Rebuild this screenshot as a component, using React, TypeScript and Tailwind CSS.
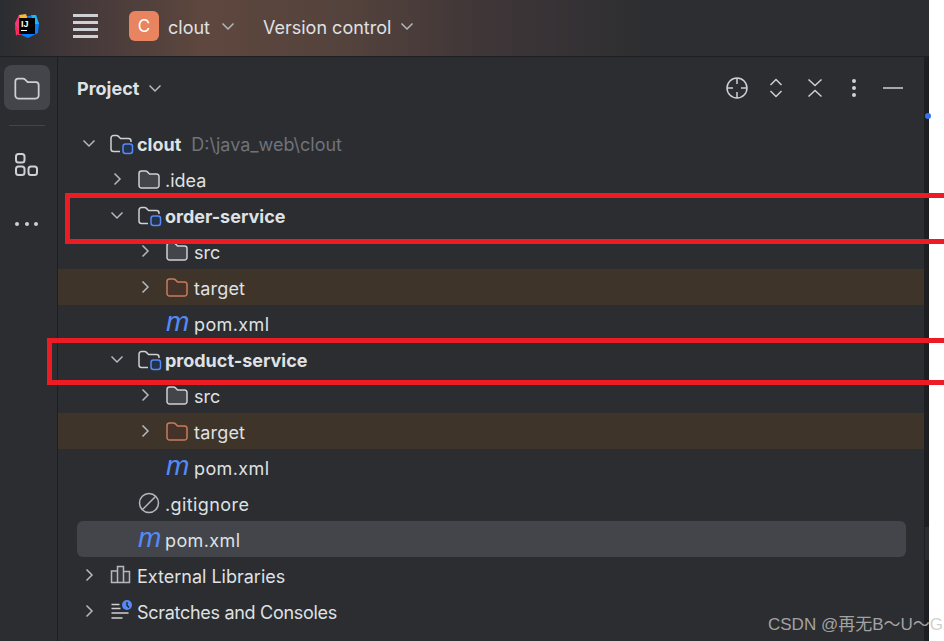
import type { ReactNode } from "react"

const Chevron = ({ dir, className = "text-[#b4b8bf]" }: { dir: "down" | "right"; className?: string }) => (
  <svg width="14" height="14" viewBox="0 0 14 14" fill="none" stroke="currentColor" strokeWidth="1.5" className={className}>
    {dir === "down" ? <path d="M1.5 4.5 7 10l5.5-5.5" /> : <path d="M4.5 1.5 10 7l-5.5 5.5" />}
  </svg>
)

const Folder = ({ color = "#ced0d6", fill = "#43454a" }: { color?: string; fill?: string }) => (
  <svg width="24" height="24" viewBox="0 0 24 24" fill={fill} stroke={color} strokeWidth="1.5">
    <path d="M2 6.500A2.500 2.500 0 0 1 4.500 4h4.200c.6 0 1.100.2 1.500.6L12.600 7h7a2.500 2.500 0 0 1 2.400 2.500v9a2.500 2.500 0 0 1-2.500 2.500h-15A2.500 2.500 0 0 1 2 18.500z" />
  </svg>
)

const ModuleFolder = () => (
  <svg width="26" height="24" viewBox="0 0 26 24" fill="none">
    <path d="M11 20.500H4.500A2.500 2.500 0 0 1 2 18V7A2.500 2.500 0 0 1 4.500 4.500h3.200c.6 0 1.100.2 1.500.6L11.600 7.500H19.500A2.500 2.500 0 0 1 22 10v1" stroke="#ced0d6" strokeWidth="1.500" />
    <rect x="14" y="13" width="9.500" height="9.500" rx="2.500" fill="#25324d" stroke="#548af7" strokeWidth="1.500" />
  </svg>
)

const MavenIcon = () => (
  <span className="w-[24px] -translate-y-[1px] translate-x-[1px] font-['Liberation_Sans',sans-serif] text-[28px] italic leading-none text-[#548af7]">m</span>
)

const IgnoreIcon = () => (
  <svg width="24" height="24" viewBox="0 0 24 24" fill="none" stroke="#b4b8bf" strokeWidth="1.500">
    <circle cx="12" cy="12" r="9.500" />
    <path d="M5.500 18.500 18.500 5.500" />
  </svg>
)

const LibrariesIcon = () => (
  <svg width="24" height="24" viewBox="0 -1 24 24" fill="#36383c" stroke="#b4b8bf" strokeWidth="1.500">
    <path d="M2.500 7h6v11.500h-6zM8.500 2.500h6v16h-6zM14.500 7.500h6v11h-6z" />
  </svg>
)

const ScratchIcon = () => (
  <svg width="24" height="24" viewBox="0 -1 24 24" fill="none">
    <path d="M2.500 4.500h8M2.500 8.500h9M2.500 13h17M2.500 18h11" stroke="#ced0d6" strokeWidth="1.500" />
    <circle cx="18" cy="5" r="5" fill="#548af7" />
    <path d="M18 2v3.500l2 2" stroke="#1e1f22" strokeWidth="1.300" />
  </svg>
)

const Logo = () => (
  <div className="relative h-[24px] w-[24px]">
    <svg width="24" height="24" viewBox="0 0 24 24" className="absolute inset-0">
      <path d="M4 1 13 2 8 12 1 22 0 9z" fill="#f5387e" />
      <path d="M4 1 11 0 13 6 6 7z" fill="#fcb72c" />
      <path d="M13 2 21 1 24 10 23 19 13 24 6 21 14 10z" fill="#087cfa" />
      <path d="M16 1 21 1 24 10 20 10z" fill="#19b5f5" />
      <path d="M1 12 6 21 3 21 0 15z" fill="#fe2857" />
      <rect x="4" y="4" width="16" height="16" fill="#000" />
      <rect x="6" y="16" width="6" height="1" fill="#fff" />
    </svg>
    <span className="absolute left-[6px] top-[5px] font-['Liberation_Sans',sans-serif] text-[9px] font-bold leading-[10px] text-white">IJ</span>
  </div>
)

type RowProps = {
  indent: string
  open?: boolean
  icon: ReactNode
  children: ReactNode
  className?: string
}

const Row = ({ indent, open, icon, children, className = "" }: RowProps) => (
  <div className={`flex h-[36px] items-center ${indent} ${className}`}>
    <div className="flex w-[30px] justify-start pl-[3px]">
      {open !== undefined && <Chevron dir={open ? "down" : "right"} />}
    </div>
    <div className="flex h-[24px] w-[28px] items-center">{icon}</div>
    <div className="flex translate-y-[1px] items-baseline whitespace-nowrap">{children}</div>
  </div>
)

const ServiceRows = ({ name }: { name: string }) => (
  <>
    <Row indent="pl-[49px]" open icon={<ModuleFolder />}>
      <span className="font-bold text-[#dfe1e5]">{name}</span>
    </Row>
    <Row indent="pl-[77px]" open={false} icon={<Folder />}>
      <span className="ml-[1px]">src</span>
    </Row>
    <Row indent="pl-[77px]" open={false} icon={<Folder color="#c77d55" fill="#45322b" />} className="bg-[#3f3429]">
      <span className="ml-[1px] tracking-[0.2px]">target</span>
    </Row>
    <Row indent="pl-[77px]" icon={<MavenIcon />}>
      <span className="ml-[1px] tracking-[0.4px]">pom.xml</span>
    </Row>
  </>
)

export default function App() {
  return (
    <div className="relative h-[641px] w-[944px] overflow-hidden bg-white font-['Inter',sans-serif] text-[18px] text-[#dfe1e5]">
      <div className="flex h-full w-[929px] flex-col bg-[#2b2d30]">
        {/* Title bar */}
        <header className="flex h-[57px] shrink-0 items-center border-b border-[#1e1f22] bg-[linear-gradient(90deg,#2b2d30_0%,#43383a_8%,#5e473e_22%,#53423c_38%,#3f3638_52%,#2d2e31_70%,#2b2d30_100%)] pb-[4px] pl-[15px]">
          <Logo />
          <div className="ml-[34px] flex w-[25px] flex-col gap-[4.500px]">
            <div className="h-[2.500px] bg-[#ced0d6]" />
            <div className="h-[2.500px] bg-[#ced0d6]" />
            <div className="h-[2.500px] bg-[#ced0d6]" />
            <div className="h-[2.500px] bg-[#ced0d6]" />
          </div>
          <div className="ml-[31px] flex h-[30px] w-[30px] items-center justify-center rounded-[6px] bg-[#e8845f] text-[17px] text-white">
            <span className="translate-y-[1px]">C</span>
          </div>
          <span className="ml-[9px] translate-y-[1px]">clout</span>
          <Chevron dir="down" className="ml-[11px] text-[#b4b8bf]" />
          <span className="ml-[28px] translate-y-[1px]">Version control</span>
          <Chevron dir="down" className="ml-[9px] text-[#b4b8bf]" />
        </header>

        <div className="flex min-h-0 flex-1">
          {/* Tool window bar */}
          <aside className="flex w-[58px] shrink-0 flex-col items-start border-r border-[#1e1f22] pl-[4px] pt-[8px]">
            <div className="flex h-[45px] w-[46px] items-center justify-center rounded-[8px] bg-[#43454a]">
              <svg width="28" height="28" viewBox="0 0 24 24" fill="none" stroke="#ced0d6" strokeWidth="1.500">
                <path d="M2 6.500A2.500 2.500 0 0 1 4.500 4h4.200c.6 0 1.100.2 1.500.6L12.600 7h7a2.500 2.500 0 0 1 2.400 2.500v9a2.500 2.500 0 0 1-2.500 2.500h-15A2.500 2.500 0 0 1 2 18.500z" />
              </svg>
            </div>
            <div className="ml-[5px] mt-[15px] h-px w-[36px] bg-[#43454a]" />
            <svg width="26" height="26" viewBox="0 0 26 26" fill="none" stroke="#ced0d6" strokeWidth="2" className="ml-[10px] mt-[26px]">
              <rect x="2" y="2" width="8.500" height="8.500" rx="2.500" />
              <rect x="2" y="14.500" width="8.500" height="8.500" rx="2.500" />
              <rect x="14.500" y="14.500" width="8.500" height="8.500" rx="2.500" />
            </svg>
            <div className="ml-[11px] mt-[44px] flex gap-[5.500px]">
              <div className="h-[4px] w-[4px] rounded-full bg-[#ced0d6]" />
              <div className="h-[4px] w-[4px] rounded-full bg-[#ced0d6]" />
              <div className="h-[4px] w-[4px] rounded-full bg-[#ced0d6]" />
            </div>
          </aside>

          {/* Project panel */}
          <main className="min-w-0 flex-1">
            <div className="flex h-[68px] items-center justify-between pb-[6px] pl-[19px] pr-[19px]">
              <div className="flex items-center">
                <span className="font-bold">Project</span>
                <Chevron dir="down" className="ml-[9px] text-[#b4b8bf]" />
              </div>
              <div className="flex items-center gap-[15px] text-[#ced0d6]">
                <svg width="24" height="24" viewBox="0 0 24 24" fill="none" stroke="currentColor" strokeWidth="1.500">
                  <circle cx="12" cy="12" r="10" />
                  <path d="M12 2v6M12 16v6M2 12h6M16 12h6" />
                </svg>
                <svg width="24" height="24" viewBox="0 0 24 24" fill="none" stroke="currentColor" strokeWidth="1.500">
                  <path d="M6.500 9 12 3.500 17.500 9M6.500 15l5.500 5.500 5.500-5.500" />
                </svg>
                <svg width="24" height="24" viewBox="0 0 24 24" fill="none" stroke="currentColor" strokeWidth="1.500">
                  <path d="M5.500 3.500 12 9.500l6.500-6M5.500 20.500 12 14.500l6.500 6" />
                </svg>
                <svg width="24" height="24" viewBox="0 0 24 24" fill="currentColor">
                  <circle cx="12" cy="5" r="2" />
                  <circle cx="12" cy="12" r="2" />
                  <circle cx="12" cy="19" r="2" />
                </svg>
                <svg width="24" height="24" viewBox="0 0 24 24" fill="none" stroke="currentColor" strokeWidth="1.500">
                  <path d="M2 12h20" />
                </svg>
              </div>
            </div>

            <Row indent="pl-[21px]" open icon={<ModuleFolder />}>
              <span className="font-bold text-[#dfe1e5]">clout</span>
              <span className="ml-[10px] text-[#6f737a]">D:\java_web\clout</span>
            </Row>
            <Row indent="pl-[49px]" open={false} icon={<Folder />}>.idea</Row>
            <ServiceRows name="order-service" />
            <ServiceRows name="product-service" />
            <Row indent="pl-[49px]" icon={<IgnoreIcon />}>
              <span className="tracking-[0.4px]">.gitignore</span>
            </Row>
            <Row indent="ml-[19px] mr-[18px] rounded-[6px] bg-[#43454a] pl-[30px]" icon={<MavenIcon />}>
              <span className="tracking-[0.4px]">pom.xml</span>
            </Row>
            <Row indent="pl-[21px]" open={false} icon={<LibrariesIcon />}>External Libraries</Row>
            <Row indent="pl-[21px]" open={false} icon={<ScratchIcon />}>
              <span className="tracking-[-0.3px]">Scratches and Consoles</span>
            </Row>
          </main>

          {/* Right stripe */}
          <div className="relative w-[5px] shrink-0 bg-[#1e1f22]">
            <div className="absolute left-[1px] top-[56px] h-[6px] w-[6px] rounded-full bg-[#3574f0]" />
            <div className="absolute bottom-[81px] left-[1px] h-[33px] w-[4px] bg-[#2b2d30]" />
          </div>
        </div>
      </div>

      {/* Annotation boxes drawn over the screenshot */}
      <div className="absolute left-[65px] top-[193px] h-[51px] w-[900px] border-[5px] border-[#ed1c24]" />
      <div className="absolute left-[47px] top-[338px] h-[47px] w-[920px] border-[5px] border-[#ed1c24]" />

      {/* Watermark */}
      <div className="absolute left-[768px] top-[615px] whitespace-nowrap font-['Liberation_Sans','Noto_Sans_CJK_SC',sans-serif] text-[17px] leading-[20px] text-[#c3c3c3]/80">
        CSDN @再无B～U～G
      </div>
    </div>
  )
}
